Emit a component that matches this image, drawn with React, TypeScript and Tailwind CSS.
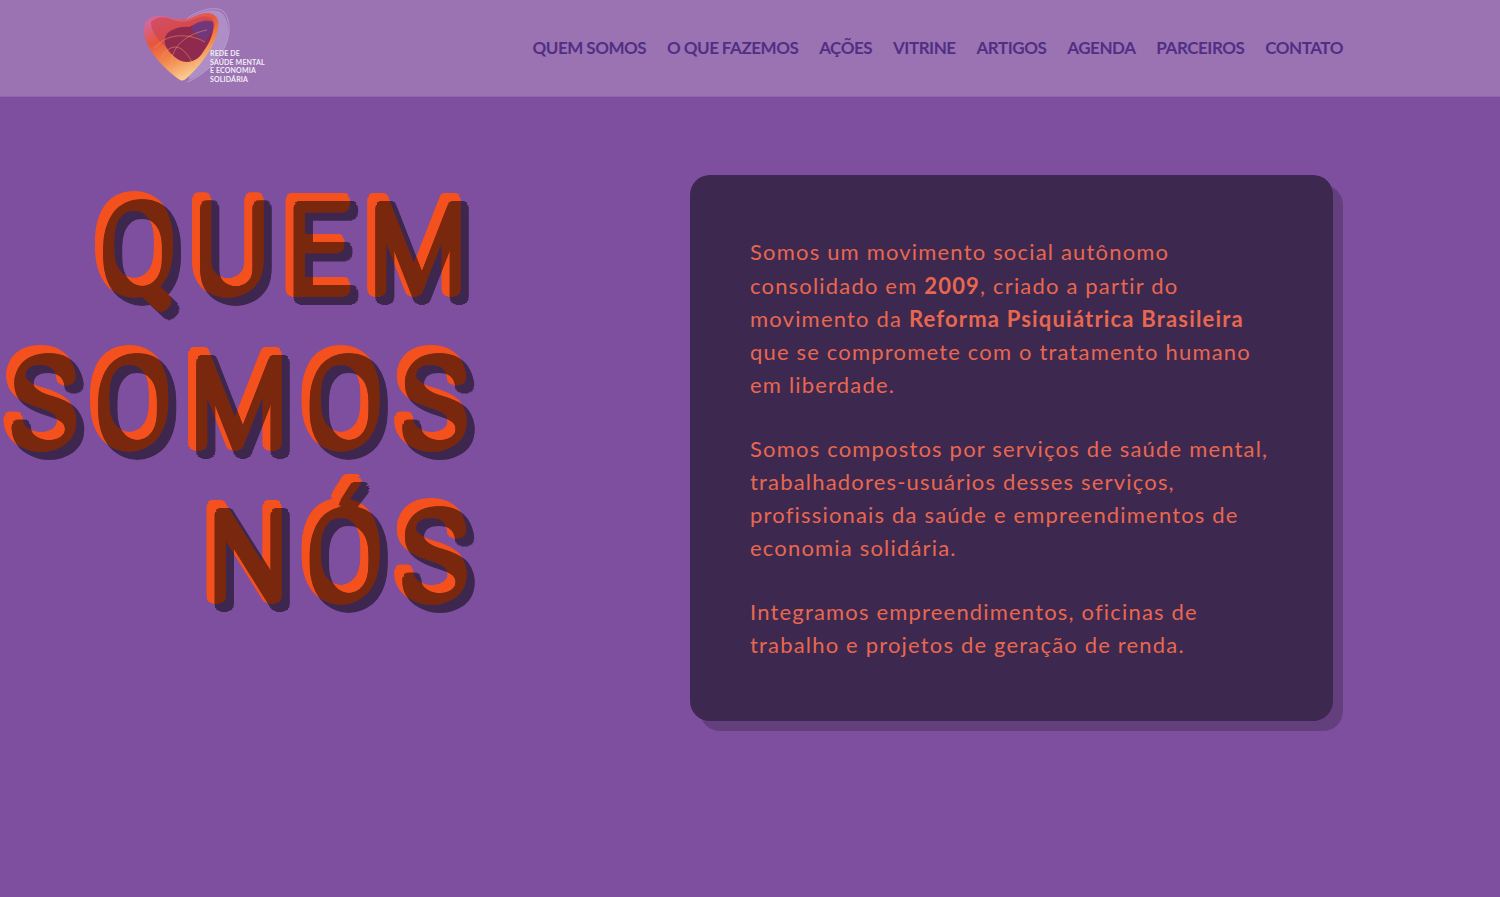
const navItems = ["QUEM SOMOS", "O QUE FAZEMOS", "AÇÕES", "VITRINE", "ARTIGOS", "AGENDA", "PARCEIROS", "CONTATO"];

const headingLines = ["QUEM", "SOMOS", "NÓS"];

// dilates the thin glyphs so the strokes get round ends, like the display font
const roundStroke =
  "[text-shadow:6.5px_0,6px_2.5px,4.6px_4.6px,2.5px_6px,0_6.5px,-2.5px_6px,-4.6px_4.6px,-6px_2.5px,-6.5px_0,-6px_-2.5px,-4.6px_-4.6px,-2.5px_-6px,0_-6.5px,2.5px_-6px,4.6px_-4.6px,6px_-2.5px]";

const Logo = () => (
  <div className="relative h-[96px] w-[130px]">
    <svg viewBox="0 0 90 80" className="absolute left-0 top-[6px] h-[80px] w-[90px]" fill="none">
      <defs>
        <linearGradient id="heartBody" x1="0.15" y1="0.1" x2="0.6" y2="1">
          <stop offset="0" stopColor="#d4669a" />
          <stop offset="0.3" stopColor="#e8553c" />
          <stop offset="0.62" stopColor="#f28a4c" />
          <stop offset="1" stopColor="#fbd79a" />
        </linearGradient>
      </defs>
      {/* pale back lobe */}
      <path d="M44 14C54 6 72 1 79 7C89 17 87 40 72 56C64 65 54 71 46 74Z" fill="#b79ad0" opacity="0.7" />
      {/* body */}
      <path d="M1 24C1 11 13 7 25 11C35 14 44 14 52 10C62 5 72 6 75 14C78 28 66 50 50 66C44 72 41 76 37 74C20 62 1 42 1 24Z" fill="url(#heartBody)" />
      <path d="M8 16C14 10 22 10 30 14C38 17 46 16 54 12C62 9 70 10 72 18C70 32 58 46 46 52C34 50 22 42 14 32C10 26 8 22 8 16Z" fill="#cf4450" opacity="0.7" />
      {/* dark centre */}
      <path d="M22 32C24 24 36 20 46 21C52 18 64 14 70 16C72 26 66 38 60 46C54 56 44 58 36 54C27 48 20 40 22 32Z" fill="#8f2a4e" />
      <path d="M48 21C54 15 64 13 70 16C71 24 66 30 62 36C56 33 50 27 48 21Z" fill="#6d3a82" opacity="0.85" />
      <path d="M44 13C54 4 74 -1 81 6C91 18 86 44 68 60C60 68 50 74 44 76" stroke="#c9a6d6" strokeWidth="0.7" />
      <path d="M12 42C22 28 44 26 62 36M18 52C28 36 40 36 52 62M30 68C24 50 34 30 64 24" stroke="#f0a060" strokeWidth="0.5" />
    </svg>
    <div className="absolute left-[67px] top-[49px] text-[7px] font-bold leading-[8.7px] tracking-[0.15px] text-[#f3ecf6]">
      <div>REDE DE</div>
      <div>SAÚDE MENTAL</div>
      <div>E ECONOMIA</div>
      <div>SOLIDÁRIA</div>
    </div>
  </div>
);

const App = () => {
  return (
    <div className="flex h-[897px] flex-col overflow-hidden bg-[#7d4f9e] font-['Lato',sans-serif]">
      {/* Header */}
      <header className="flex h-[97px] shrink-0 items-center justify-between border-b border-[#8f66ac] bg-[#9b73b3] pl-[143px] pr-[157px]">
        <Logo />
        <nav className="flex items-center gap-[20.8px]">
          {navItems.map((item) => (
            <a key={item} className="text-[17px] font-bold tracking-[-0.45px] [word-spacing:-0.3px] text-[#512f83]">
              {item}
            </a>
          ))}
        </nav>
      </header>

      {/* Main */}
      <main className="flex items-start pt-[78px]">
        {/* squeezed sideways, Roboto is wider than the display face */}
        <h1 className="-mt-[5px] -ml-[6px] w-[522px] shrink-0 origin-left scale-x-[0.93] text-right font-['Roboto',sans-serif] text-[128px] font-light leading-[153.5px] tracking-[15px]">
          {headingLines.map((line) => (
            <div key={line} className="relative whitespace-nowrap">
              <span className={`text-[#f4511e] ${roundStroke}`}>{line}</span>
              <span aria-hidden="true" className={`absolute right-[-8.6px] top-[8px] text-black opacity-50 ${roundStroke}`}>{line}</span>
            </div>
          ))}
        </h1>

        <div className="ml-[174px] h-[546px] w-[643px] rounded-[20px] bg-[#3d2850] px-[60px] pt-[60.3px] text-[22px] leading-[33.2px] tracking-[1.18px] text-[#e8674f] shadow-[10px_10px_0_rgba(0,0,0,0.2)]">
          <p>
            Somos um movimento social autônomo consolidado em <b>2009</b>, criado a partir do movimento da{" "}
            <b>Reforma Psiquiátrica Brasileira</b> que se compromete com o tratamento humano em liberdade.
          </p>
          <p className="mt-[30.3px]">
            Somos compostos por serviços de saúde mental, trabalhadores-usuários desses serviços, profissionais da saúde e
            empreendimentos de economia solidária.
          </p>
          <p className="mt-[30.3px]">Integramos empreendimentos, oficinas de trabalho e projetos de geração de renda.</p>
        </div>
      </main>
    </div>
  );
};

export default App;
